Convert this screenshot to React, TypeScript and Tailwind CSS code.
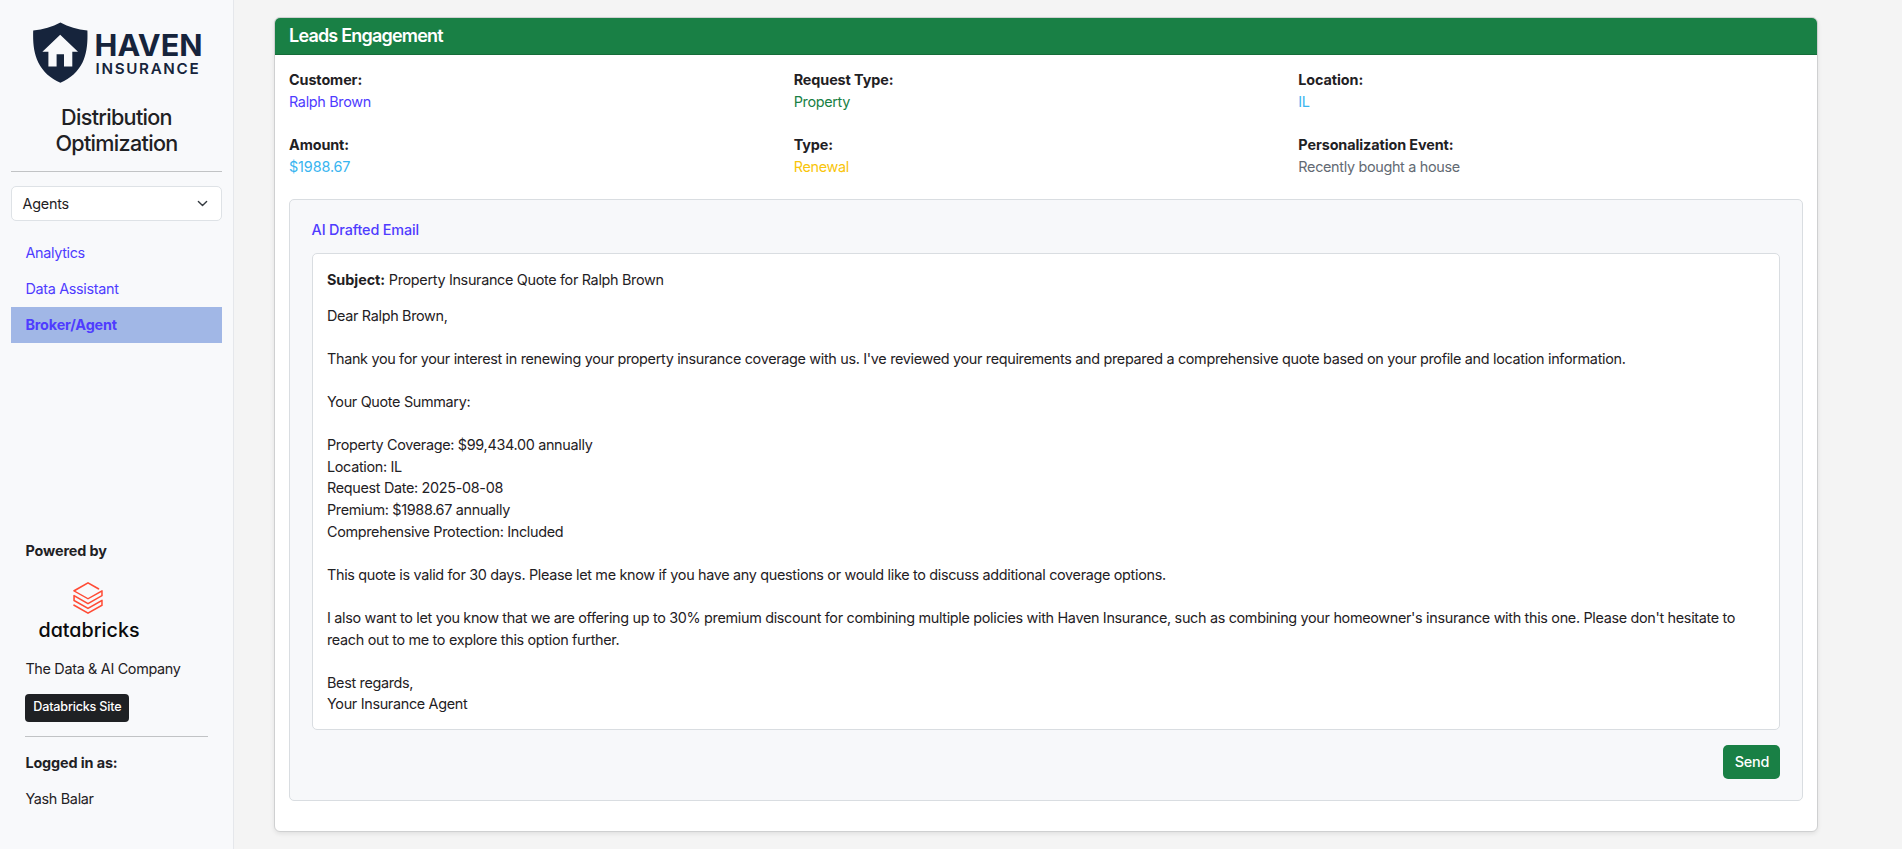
import type { ReactNode } from "react";
import { SiDatabricks } from "react-icons/si";

const NAV = ["Analytics", "Data Assistant", "Broker/Agent"];

const EMAIL = `Dear Ralph Brown,

Thank you for your interest in renewing your property insurance coverage with us. I've reviewed your requirements and prepared a comprehensive quote based on your profile and location information.

Your Quote Summary:

Property Coverage: $99,434.00 annually
Location: IL
Request Date: 2025-08-08
Premium: $1988.67 annually
Comprehensive Protection: Included

This quote is valid for 30 days. Please let me know if you have any questions or would like to discuss additional coverage options.

I also want to let you know that we are offering up to 30% premium discount for combining multiple policies with Haven Insurance, such as combining your homeowner's insurance with this one. Please don't hesitate to reach out to me to explore this option further.

Best regards,
Your Insurance Agent`;

function HavenLogo() {
  return (
    <svg className="mt-[22px] ml-[21.5px] block h-[61px] w-[170px] tracking-normal" viewBox="0 0 170 61">
      <path
        d="M27.4 0.5C35.5 5 44.5 7.6 54.4 8.4C54.8 20 54 31 49.5 40.5C45 49.5 37.5 56.5 27.4 60.8C17.3 56.5 9.8 49.5 5.3 40.5C0.6 31 -0.2 20 0.2 8.4C10.3 7.6 19.3 5 27.4 0.5Z"
        fill="#16243c"
      />
      <path d="M27.2 12.7L45 29.8H39.3V44.4H31V32.3H23.6V44.4H15.4V29.8H9.4Z" fill="#f8f9fb" />
      <text x="61.6" y="33.6" textLength="108" lengthAdjust="spacingAndGlyphs" fill="#16243c" className="font-['Inter'] text-[29.8px] font-bold">
        HAVEN
      </text>
      <text x="62.6" y="51.8" textLength="103" lengthAdjust="spacing" fill="#16243c" className="font-['Inter'] text-[15.2px] font-semibold">
        INSURANCE
      </text>
    </svg>
  );
}

function DatabricksLogo() {
  return (
    <div className="ml-[13.5px] flex w-[100px] flex-col items-center">
      <SiDatabricks className="mr-[2px] h-[32px] w-[32px] text-[#ff4b35]" />
      <svg className="mt-[4px] block h-[24px] w-[100px] overflow-visible tracking-normal" viewBox="0 0 100 24">
        <text
          x="-0.5"
          y="19.2"
          textLength="101"
          lengthAdjust="spacingAndGlyphs"
          fill="#0b0b0b"
          className="font-['Inter'] text-[20.2px] font-medium [font-feature-settings:'cv11']"
        >
          databricks
        </text>
      </svg>
    </div>
  );
}

function Field({ label, color, children }: { label: string; color: string; children: ReactNode }) {
  return (
    <div className="mb-[21.6px]">
      <div className="font-bold tracking-[-0.1px]">{label}</div>
      <div className={color}>{children}</div>
    </div>
  );
}

export default function App() {
  return (
    <div className="flex h-[849px] w-full overflow-hidden bg-[#f4f4f4] font-['Inter',sans-serif] text-[14.4px] leading-[21.6px] tracking-[-0.32px] text-[#1f2124]">
      <aside className="flex w-[234px] shrink-0 flex-col border-r border-[#e5e7eb] bg-[#f8f9fb] px-[11px]">
        <HavenLogo />
        <h1 className="mt-[21px] text-center text-[21.6px] leading-[26px] font-medium tracking-[-0.7px]">
          Distribution
          <br />
          Optimization
        </h1>
        <hr className="mt-[15px] border-[#c1c3c5]" />
        <div className="mt-[14px] flex h-[35px] items-center justify-between rounded-[5px] border border-[#dee2e6] bg-white pr-[13px] pl-[10.5px]">
          <span className="tracking-[-0.25px]">Agents</span>
          <svg className="h-[11px] w-[11px]" viewBox="0 0 16 16" fill="none" stroke="#343a40" strokeWidth="2" strokeLinecap="round" strokeLinejoin="round">
            <path d="m2 5 6 6 6-6" />
          </svg>
        </div>
        <nav className="mt-[14px] text-[#4f3cff]">
          {NAV.map((item, i) => (
            <div
              key={item}
              className={
                i === 2
                  ? "flex h-[36px] items-center bg-[#a1b7e6] px-[14.4px] font-bold tracking-[-0.16px]"
                  : "flex h-[36px] items-center px-[14.4px]"
              }
            >
              {item}
            </div>
          ))}
        </nav>
        <div className="mt-auto px-[14.4px] pb-[39px]">
          <div className="font-bold tracking-[-0.1px]">Powered by</div>
          <div className="mt-[21px]">
            <DatabricksLogo />
          </div>
          <div className="mt-[16px]">The Data &amp; AI Company</div>
          <button className="mt-[14.4px] block h-[28px] w-[104px] rounded-[4px] bg-[#1f2124] pb-[3px] text-[12.6px] leading-[19px] font-medium tracking-[-0.2px] text-white">
            Databricks Site
          </button>
          <hr className="mt-[14px] border-[#c1c3c5]" />
          <div className="mt-[15px] font-bold tracking-[-0.12px]">Logged in as:</div>
          <div className="mt-[14.4px]">Yash Balar</div>
        </div>
      </aside>

      <main className="flex-1 pt-[17px] pr-[84px] pl-[40px]">
        <section className="h-[815px] rounded-[6px] border border-[#cfd0d1] bg-white shadow-[0_2px_4px_rgba(0,0,0,0.08)]">
          <header className="flex h-[37px] items-center rounded-t-[5px] border-b border-[#156c39] bg-[#198045] px-[14px] text-[18px] font-semibold tracking-[-0.8px] text-white">
            Leads Engagement
          </header>
          <div className="px-[14px] pt-[14.4px]">
            <div className="grid grid-cols-3">
              <Field label="Customer:" color="text-[#4f3cff]">Ralph Brown</Field>
              <Field label="Request Type:" color="text-[#198045]">Property</Field>
              <Field label="Location:" color="text-[#39b5f0]">IL</Field>
              <Field label="Amount:" color="tracking-[-0.12px] text-[#39b5f0]">$1988.67</Field>
              <Field label="Type:" color="text-[#f9c50b]">Renewal</Field>
              <Field label="Personalization Event:" color="text-[#636a73]">Recently bought a house</Field>
            </div>
            <div className="rounded-[5px] border border-[#d9dde1] bg-[#f7f8fa] p-[21.6px]">
              <h2 className="mt-[-1px] mb-[15.4px] leading-[17.28px] font-medium tracking-[-0.15px] text-[#4f3cff]">AI Drafted Email</h2>
              <div className="rounded-[5px] border border-[#d9dde1] bg-white p-[14.4px]">
                <p className="mb-[14.4px]">
                  <b className="font-bold tracking-[-0.05px]">Subject:</b> Property Insurance Quote for Ralph Brown
                </p>
                <div className="whitespace-pre-line">{EMAIL}</div>
              </div>
              <div className="mt-[14.4px] flex justify-end">
                <button className="h-[34px] w-[57px] rounded-[5px] bg-[#198045] font-medium tracking-[-0.2px] text-white">Send</button>
              </div>
            </div>
          </div>
        </section>
      </main>
    </div>
  );
}
